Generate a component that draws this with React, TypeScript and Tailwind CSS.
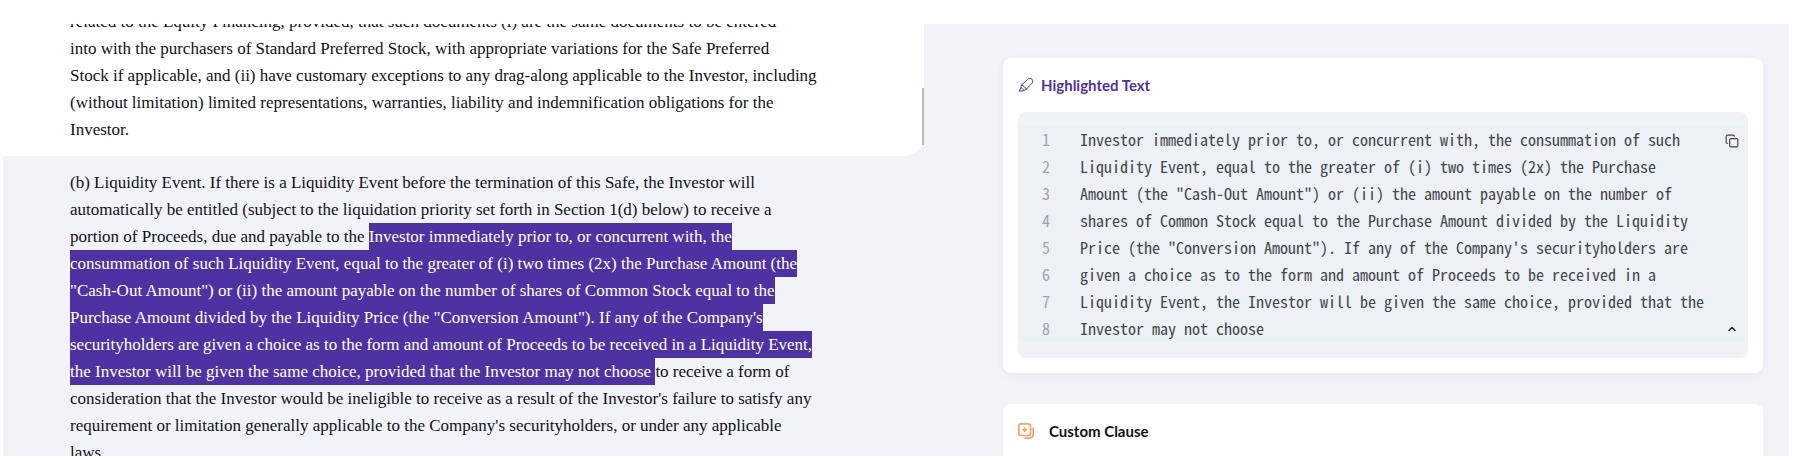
import { ChevronUp, Copy } from "lucide-react";

interface DocumentLine {
  before?: string;
  selected?: string;
  after?: string;
}

const previousSection: DocumentLine[] = [
  { before: "related to the Equity Financing, provided, that such documents (i) are the same documents to be entered" },
  { before: "into with the purchasers of Standard Preferred Stock, with appropriate variations for the Safe Preferred" },
  { before: "Stock if applicable, and (ii) have customary exceptions to any drag-along applicable to the Investor, including" },
  { before: "(without limitation) limited representations, warranties, liability and indemnification obligations for the" },
  { before: "Investor." },
];

const activeSection: DocumentLine[] = [
  { before: "(b) Liquidity Event. If there is a Liquidity Event before the termination of this Safe, the Investor will" },
  { before: "automatically be entitled (subject to the liquidation priority set forth in Section 1(d) below) to receive a" },
  {
    before: "portion of Proceeds, due and payable to the ",
    selected: "Investor immediately prior to, or concurrent with, the",
  },
  { selected: "consummation of such Liquidity Event, equal to the greater of (i) two times (2x) the Purchase Amount (the" },
  { selected: "\"Cash-Out Amount\") or (ii) the amount payable on the number of shares of Common Stock equal to the" },
  { selected: "Purchase Amount divided by the Liquidity Price (the \"Conversion Amount\"). If any of the Company's" },
  { selected: "securityholders are given a choice as to the form and amount of Proceeds to be received in a Liquidity Event," },
  {
    selected: "the Investor will be given the same choice, provided that the Investor may not choose ",
    after: "to receive a form of",
  },
  { before: "consideration that the Investor would be ineligible to receive as a result of the Investor's failure to satisfy any" },
  { before: "requirement or limitation generally applicable to the Company's securityholders, or under any applicable" },
  { before: "laws." },
];

const highlightedLines = [
  "Investor immediately prior to, or concurrent with, the consummation of such",
  "Liquidity Event, equal to the greater of (i) two times (2x) the Purchase",
  "Amount (the \"Cash-Out Amount\") or (ii) the amount payable on the number of",
  "shares of Common Stock equal to the Purchase Amount divided by the Liquidity",
  "Price (the \"Conversion Amount\"). If any of the Company's securityholders are",
  "given a choice as to the form and amount of Proceeds to be received in a",
  "Liquidity Event, the Investor will be given the same choice, provided that the",
  "Investor may not choose",
];

function DocumentText({ lines }: { lines: DocumentLine[] }) {
  return (
    <p>
      {lines.map((line, index) => (
        <span key={index} className="block whitespace-pre">
          {line.before}
          {line.selected && (
            <mark className="inline-block bg-[#4f32a1] align-top text-white">
              {line.selected}
            </mark>
          )}
          {line.after}
        </span>
      ))}
    </p>
  );
}

function HighlighterIcon() {
  return (
    <svg
      className="h-4 w-4 shrink-0 text-[#4f32a1]"
      viewBox="0 0 16 16"
      fill="none"
      stroke="currentColor"
      strokeWidth="1"
      strokeLinecap="round"
      strokeLinejoin="round"
      aria-hidden="true"
    >
      <path d="M3.6 8 9.5 2.400c1.500-1.400 3.200-1.400 4.400-.2 1.200 1.200 1.200 2.900-.1 4.300L8.300 12.300" />
      <path d="M3.600 8c-.7.800-.8 1.700-.5 2.500L1 14h4.200l.7-.9c.8.200 1.700-.1 2.400-.8" />
      <path d="M3.100 10.500c.6 1.200 1.500 2.100 2.800 2.600M3.600 8c2 .8 3.700 2.300 4.700 4.300" />
    </svg>
  );
}

function ClauseIcon() {
  return (
    <svg
      className="h-4 w-4 shrink-0 text-[#f9a369]"
      viewBox="0 0 16 16"
      fill="none"
      stroke="currentColor"
      strokeWidth="1.7"
      strokeLinecap="round"
      strokeLinejoin="round"
      aria-hidden="true"
    >
      <rect x="0.9" y="0.9" width="11.6" height="11.6" rx="2" />
      <path d="M15.1 5v7.100a3 3 0 0 1-3 3H7" />
      <path d="M6.700 5.200v3M5.200 6.700h3" strokeWidth="2" />
    </svg>
  );
}

export default function App() {
  return (
    <div className="h-screen bg-white pt-6 pr-1 pb-1 pl-[3px]">
      <main className="grid h-full grid-cols-[921fr_865fr] overflow-hidden bg-[#f2f3f9]">
        <article className="min-w-0 font-['Liberation_Serif',serif] text-[17px] leading-[27px] text-[#111118]">
          <section className="relative rounded-br-[20px] bg-white pb-[13px] pl-[67px]">
            <div className="-mt-4">
              <DocumentText lines={previousSection} />
            </div>
            {/* scrollbar thumb */}
            <div className="absolute right-0 bottom-[11px] h-[57px] w-0.5 bg-[#b9b9c0]" />
          </section>
          <section className="pt-[13px] pl-[67px]">
            <DocumentText lines={activeSection} />
          </section>
        </article>

        <aside className="flex min-w-0 flex-col gap-[31px] pt-[34px] pr-[26px] pl-[79px] font-[Lato,sans-serif]">
          <section className="rounded-lg bg-white p-[15px] shadow-[0_2px_8px_rgba(60,70,110,0.06)]">
            <header className="flex h-6 items-center gap-[7px]">
              <HighlighterIcon />
              <h2 className="text-[15px] leading-6 font-bold text-[#4f32a1]">
                Highlighted Text
              </h2>
            </header>

            <div className="mt-[15px] rounded-lg bg-[#f1f2f6] pt-[14px] pb-4">
              <div className="relative bg-[#ecf1f5]">
                <ol className="font-['Noto_Sans_Mono_CJK_SC','Liberation_Mono',monospace] text-[16px] leading-[27px] text-[#45454c]">
                  {highlightedLines.map((line, index) => (
                    <li key={index} className="flex">
                      <span className="w-8 shrink-0 text-right text-[#a2a4aa]">
                        {index + 1}
                      </span>
                      <span className="ml-[30px] whitespace-pre">{line}</span>
                    </li>
                  ))}
                </ol>
                <button
                  type="button"
                  aria-label="Copy text"
                  className="absolute top-2 right-[9px] text-[#44444a]"
                >
                  <Copy className="h-3.5 w-3.5" strokeWidth={2} />
                </button>
                <button
                  type="button"
                  aria-label="Collapse"
                  className="absolute right-[10px] bottom-[7px] text-[#222228]"
                >
                  <ChevronUp className="h-3 w-3" strokeWidth={3} />
                </button>
              </div>
            </div>
          </section>

          <section className="flex-1 rounded-t-lg bg-white p-[15px]">
            <header className="flex h-6 items-center gap-[15px]">
              <ClauseIcon />
              <h2 className="text-[15px] leading-6 font-bold text-[#111118]">
                Custom Clause
              </h2>
            </header>
          </section>
        </aside>
      </main>
    </div>
  );
}
